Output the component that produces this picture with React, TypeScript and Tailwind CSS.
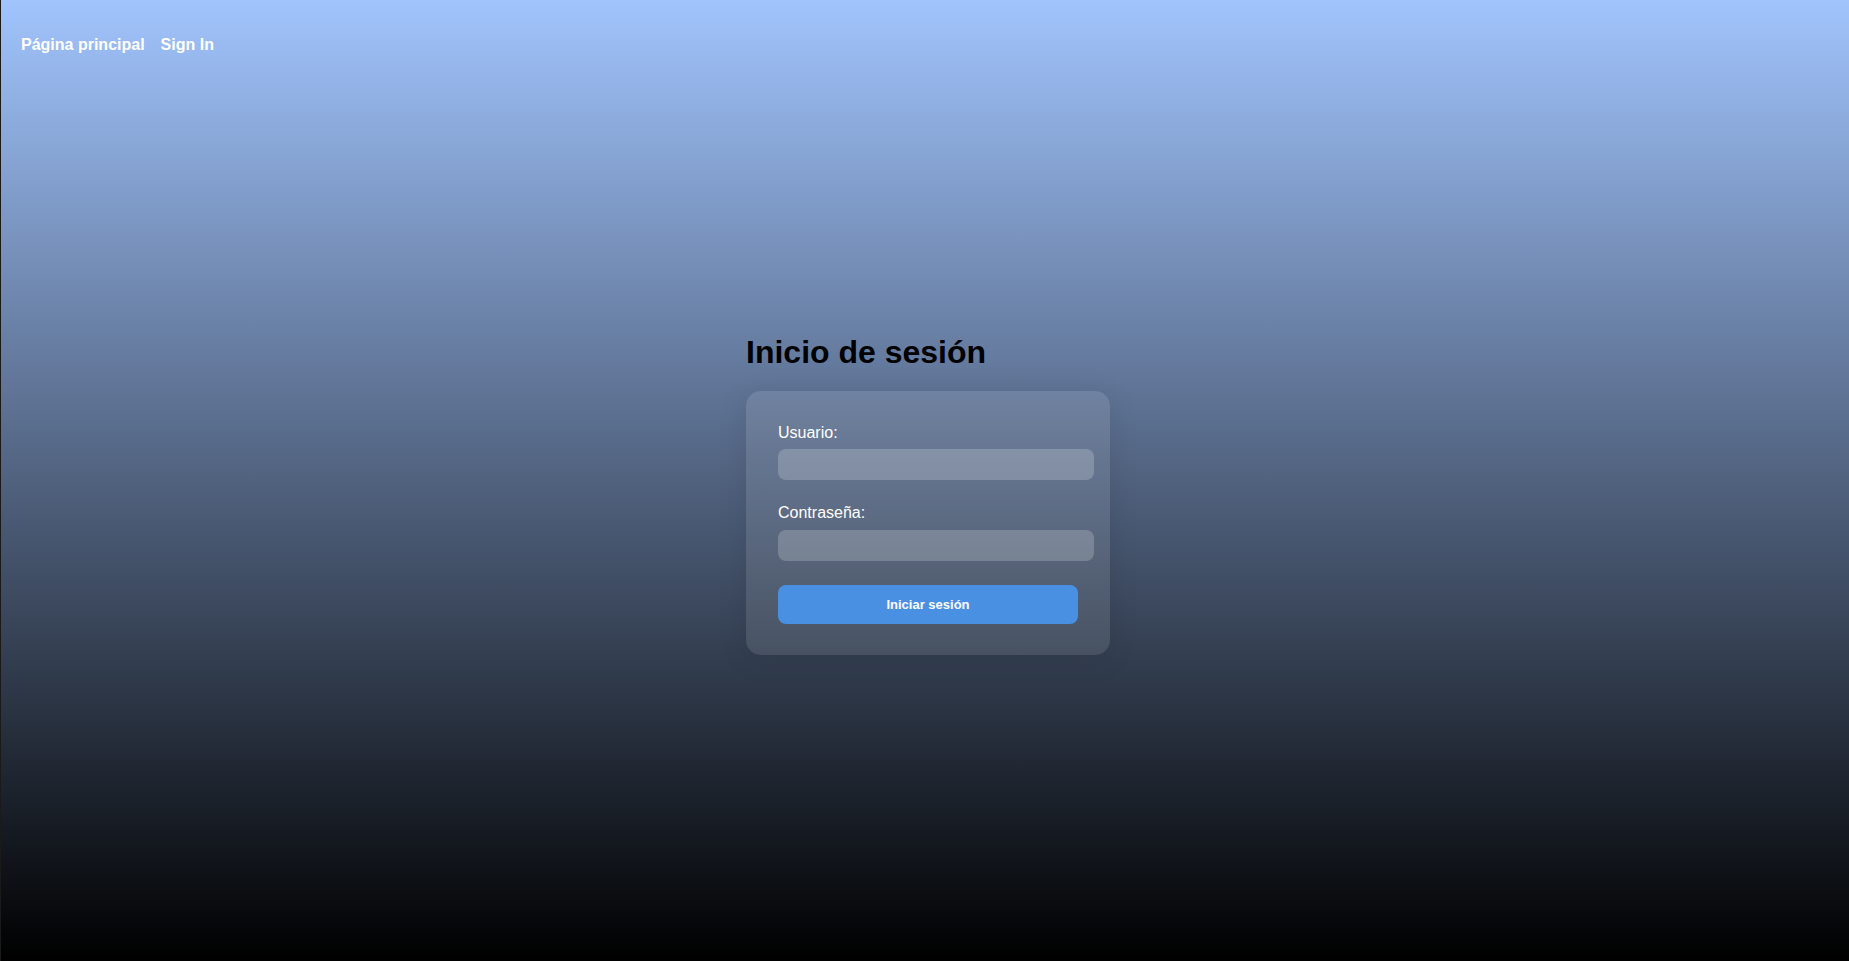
// App.tsx
const App: React.FC = () => {
  return (
    <div
      className="h-[961px] border-l border-[#1a1a1a] bg-[linear-gradient(to_bottom,#a1c4fd,#000000)]"
      style={{ fontFamily: '"Liberation Sans", Arial, sans-serif' }}
    >
      {/* Navegación */}
      <nav className="flex h-[55px] gap-4 px-5 pt-[36px] text-base font-bold leading-[18px] text-white">
        <a href="#">Página principal</a>
        <a href="#">Sign In</a>
      </nav>

      {/* Formulario */}
      <div className="flex justify-center pl-[6px] pt-[279px]">
        <div className="w-[364px]">
          <h1 className="mb-5 text-[32px] font-bold leading-[37px] text-black">Inicio de sesión</h1>

          <form className="rounded-[15px] bg-white/10 px-8 pb-[31px] pt-[33px] shadow-[0_4px_30px_rgba(0,0,0,0.1)]">
            <div className="mb-6">
              <label className="mb-[7px] block text-base leading-[18px] text-white">Usuario:</label>
              <input type="text" className="block h-[31px] w-[calc(100%+16px)] rounded-lg bg-white/20 px-2 text-white outline-none" />
            </div>
            <div className="mb-6">
              <label className="mb-2 block text-base leading-[18px] text-white">Contraseña:</label>
              <input type="password" className="block h-[31px] w-[calc(100%+16px)] rounded-lg bg-white/20 px-2 text-white outline-none" />
            </div>
            <button type="button" className="h-[39px] w-full rounded-lg bg-[#4a90e2] text-[13px] font-bold text-white">
              Iniciar sesión
            </button>
          </form>
        </div>
      </div>
    </div>
  );
};

export default App;
